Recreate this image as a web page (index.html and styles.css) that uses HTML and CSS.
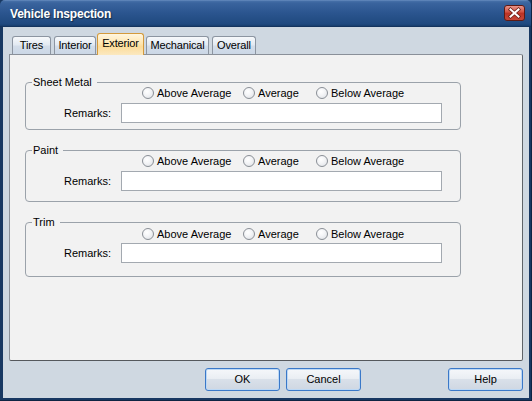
FILE: index.html
```
<!DOCTYPE html>
<html>
<head>
<meta charset="utf-8">
<link rel="stylesheet" href="styles.css">
</head>
<body>
<div class="window">
  <div class="titlebar">
    <span class="title">Vehicle Inspection</span>
    <span class="close">
      <svg width="21" height="16" viewBox="0 0 21 16">
        <defs>
          <linearGradient id="cg" x1="0" y1="0" x2="0" y2="1">
            <stop offset="0" stop-color="#e99a90"/>
            <stop offset="0.45" stop-color="#cf4f40"/>
            <stop offset="0.5" stop-color="#bb3224"/>
            <stop offset="1" stop-color="#c8493a"/>
          </linearGradient>
        </defs>
        <rect x="0.5" y="0.5" width="20" height="15" rx="2.5" fill="url(#cg)" stroke="#5e1a14"/>
        <path d="M6.5 4.5 L14.5 11.5 M14.5 4.5 L6.5 11.5" stroke="#6b1e16" stroke-width="3.6" stroke-linecap="square"/>
        <path d="M6.5 4.5 L14.5 11.5 M14.5 4.5 L6.5 11.5" stroke="#ffffff" stroke-width="2" stroke-linecap="square"/>
      </svg>
    </span>
  </div>
  <div class="client">
    <div class="tabs">
      <div class="tab tab-tires">Tires</div>
      <div class="tab tab-interior">Interior</div>
      <div class="tab tab-exterior selected">Exterior</div>
      <div class="tab tab-mechanical">Mechanical</div>
      <div class="tab tab-overall">Overall</div>
    </div>
    <div class="panel">
      <fieldset class="group group-sheet">
        <legend>Sheet Metal</legend>
        <div class="ratings">
          <span class="radio r-above"><span class="dot"></span>Above Average</span>
          <span class="radio r-avg"><span class="dot"></span>Average</span>
          <span class="radio r-below"><span class="dot"></span>Below Average</span>
        </div>
        <div class="remarks">
          <span class="remarks-label">Remarks:</span>
          <span class="textbox"></span>
        </div>
      </fieldset>
      <fieldset class="group group-paint">
        <legend>Paint</legend>
        <div class="ratings">
          <span class="radio r-above"><span class="dot"></span>Above Average</span>
          <span class="radio r-avg"><span class="dot"></span>Average</span>
          <span class="radio r-below"><span class="dot"></span>Below Average</span>
        </div>
        <div class="remarks">
          <span class="remarks-label">Remarks:</span>
          <span class="textbox"></span>
        </div>
      </fieldset>
      <fieldset class="group group-trim">
        <legend>Trim</legend>
        <div class="ratings">
          <span class="radio r-above"><span class="dot"></span>Above Average</span>
          <span class="radio r-avg"><span class="dot"></span>Average</span>
          <span class="radio r-below"><span class="dot"></span>Below Average</span>
        </div>
        <div class="remarks">
          <span class="remarks-label">Remarks:</span>
          <span class="textbox"></span>
        </div>
      </fieldset>
    </div>
    <div class="buttons">
      <span class="btn btn-ok">OK</span>
      <span class="btn btn-cancel">Cancel</span>
      <span class="btn btn-help">Help</span>
    </div>
  </div>
</div>
</body>
</html>
```
FILE: styles.css
```
* { box-sizing: border-box; }
html, body { margin: 0; padding: 0; }
body {
  width: 532px;
  height: 401px;
  overflow: hidden;
  font-family: "Liberation Sans", Arial, sans-serif;
  font-size: 11px;
  color: #000;
}
.window {
  width: 532px;
  height: 401px;
  display: flex;
  flex-direction: column;
  background: #183862;
  border-right: 1px solid #0e2443;
  border-bottom: 1px solid #0e2443;
}
.titlebar {
  height: 27px;
  flex: none;
  display: flex;
  align-items: flex-start;
  justify-content: space-between;
  background: linear-gradient(#7195c6 0, #4670a8 1px, #3a649e 3px, #2c5690 12px, #1f497f 24px, #173d6d 26px, #0f2a50 27px);
  border-radius: 5px 5px 0 0;
}
.title {
  color: #fff;
  font-weight: bold;
  font-size: 12px;
  letter-spacing: -0.2px;
  line-height: 14px;
  padding: 7px 0 0 10px;
  text-shadow: 1px 1px 1px rgba(0, 0, 0, 0.45);
}
.close {
  width: 21px;
  height: 16px;
  margin: 5px 6px 0 0;
  display: block;
}
.close svg { display: block; }
.client {
  flex: 1;
  margin: 0 2px 2px 3px;
  background: #cfd8e1;
  padding: 6px 6px 7px 6px;
  display: flex;
  flex-direction: column;
}
.tabs {
  height: 21px;
  flex: none;
  display: flex;
  align-items: flex-end;
  gap: 3px;
  padding-left: 3px;
}
.tab {
  height: 18px;
  border: 1px solid #8c95a1;
  border-bottom: none;
  border-radius: 3px 3px 0 0;
  background: linear-gradient(#f7f9fb, #e3eaf2 45%, #d3dde9 55%, #cbd7e6);
  text-align: center;
  padding-top: 2px;
  line-height: 13px;
  white-space: nowrap;
  letter-spacing: -0.15px;
}
.tab-tires { width: 39px; }
.tab-interior { width: 42px; }
.tab-exterior { width: 47px; }
.tab-mechanical { width: 63px; }
.tab-overall { width: 44px; }
.tab.selected {
  height: 22px;
  margin: 0 -1px -1px -2px;
  padding-top: 3px;
  border-color: #d49a3c;
  background: linear-gradient(#fff6df, #ffe6b0 45%, #fcdc9a 60%, #fbe8c0);
  position: relative;
  z-index: 1;
}
.panel {
  height: 307px;
  flex: none;
  background: #f2f2f2;
  border: 1px solid #8a9099;
  border-right-color: #5f6368;
  border-bottom-color: #55585c;
  border-radius: 0 2px 2px 2px;
  padding: 21px 0 0 15px;
}
.group {
  width: 436px;
  margin: 0 0 14px 0;
  padding: 0 0 6px 0;
  border: 1px solid #9ba2aa;
  border-radius: 4px;
}
.group-paint { padding-bottom: 10px; }
.group-trim { padding-bottom: 13px; }
.group legend {
  margin-left: 6px;
  padding: 0 5px 0 1px;
  line-height: 13px;
}
.ratings {
  display: flex;
  align-items: center;
  height: 14px;
  margin-top: -3px;
  padding-left: 116px;
}
.group-trim .ratings { margin-top: -2px; }
.radio {
  display: flex;
  align-items: center;
  gap: 3px;
  white-space: nowrap;
  line-height: 13px;
}
.r-above { width: 101px; }
.r-avg { width: 73px; }
.dot {
  width: 12px;
  height: 12px;
  border-radius: 50%;
  border: 1px solid #8a8f96;
  background: radial-gradient(circle at 40% 35%, #ffffff 0, #f4f5f7 40%, #dcdfe4 100%);
  flex: none;
}
.remarks {
  display: flex;
  align-items: center;
  margin-top: 3px;
}
.group-trim .remarks { margin-top: 2px; }
.remarks-label {
  width: 85px;
  text-align: right;
  margin-right: 10px;
  line-height: 13px;
}
.textbox {
  width: 321px;
  height: 20px;
  background: #fff;
  border: 1px solid #a3a9b0;
}
.buttons {
  margin-top: 7px;
  height: 23px;
  display: flex;
  padding-left: 196px;
}
.btn {
  width: 75px;
  height: 23px;
  border: 1px solid #3a78c8;
  border-radius: 3px;
  background: linear-gradient(#f5f7fa, #eaeef3 45%, #d9e0e9 50%, #cfd7e2);
  box-shadow: inset 0 0 0 1px #bcd8f5;
  text-align: center;
  line-height: 21px;
}
.btn-cancel { margin-left: 6px; }
.btn-help { margin-left: auto; }
```
